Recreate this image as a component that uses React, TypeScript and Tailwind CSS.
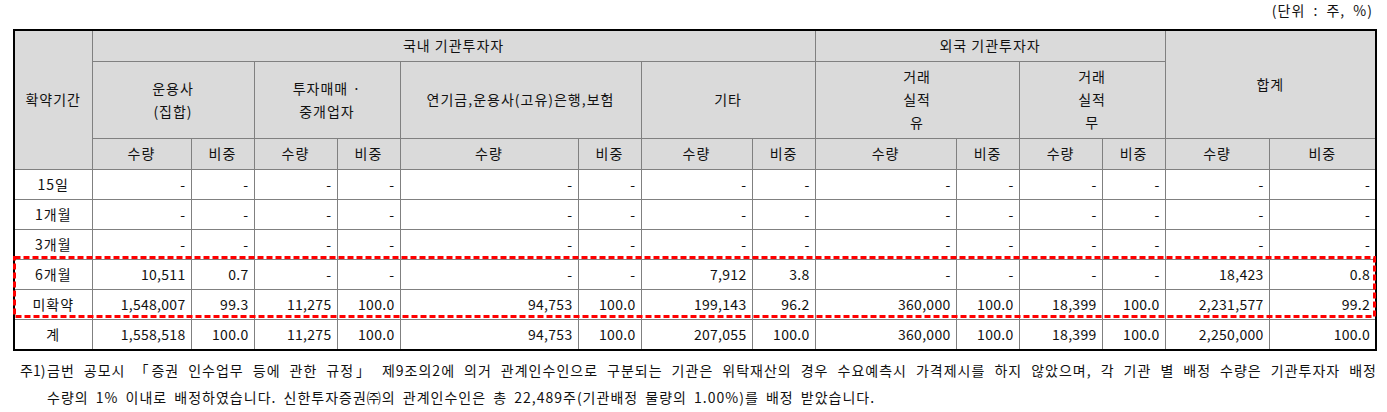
import React from 'react'

const cols = [77, 99, 63, 83, 63, 178, 63, 111, 63, 141, 63, 83, 63, 104, 106]

type Row = { label: string; values: string[] }

const rows: Row[] = [
  { label: '15일', values: ['-', '-', '-', '-', '-', '-', '-', '-', '-', '-', '-', '-', '-', '-'] },
  { label: '1개월', values: ['-', '-', '-', '-', '-', '-', '-', '-', '-', '-', '-', '-', '-', '-'] },
  { label: '3개월', values: ['-', '-', '-', '-', '-', '-', '-', '-', '-', '-', '-', '-', '-', '-'] },
  { label: '6개월', values: ['10,511', '0.7', '-', '-', '-', '-', '7,912', '3.8', '-', '-', '-', '-', '18,423', '0.8'] },
  { label: '미확약', values: ['1,548,007', '99.3', '11,275', '100.0', '94,753', '100.0', '199,143', '96.2', '360,000', '100.0', '18,399', '100.0', '2,231,577', '99.2'] },
  { label: '계', values: ['1,558,518', '100.0', '11,275', '100.0', '94,753', '100.0', '207,055', '100.0', '360,000', '100.0', '18,399', '100.0', '2,250,000', '100.0'] },
]

const th = 'border border-[#808080] bg-[#dadada] font-normal text-center align-middle p-0 tracking-[1px]'
const td = 'border border-[#808080] h-[30px] p-0 pr-[5px] text-right align-middle whitespace-nowrap tracking-[0.3px]'

export default function App() {
  return (
    <div
      className="w-[1387px] h-[412px] bg-white text-[14px] text-[#111] overflow-hidden pl-[13px]"
      style={{ fontFamily: '"Noto Sans CJK KR", "Noto Sans", sans-serif' }}
    >
      <div className="w-[1364px] h-[29px] flex justify-end pr-[4px] pt-[1px] leading-[18px] tracking-[1px] [word-spacing:4px]">(단위 : 주, %)</div>

      <div className="relative w-[1364px] border-2 border-black">
        <table className="table-fixed border-collapse border-hidden w-[1360px] leading-[23px]">
          <colgroup>
            {cols.map((w, i) => (
              <col key={i} style={{ width: w }} />
            ))}
          </colgroup>
          <thead>
            <tr className="h-[30px]">
              <th rowSpan={3} className={th}>확약기간</th>
              <th colSpan={8} className={th}>국내 기관투자자</th>
              <th colSpan={4} className={th}>외국 기관투자자</th>
              <th colSpan={2} rowSpan={2} className={th}>합계</th>
            </tr>
            <tr className="h-[77px]">
              <th colSpan={2} className={th}>운용사<br />(집합)</th>
              <th colSpan={2} className={th}>투자매매 ·<br />중개업자</th>
              <th colSpan={2} className={th}>연기금,운용사(고유)은행,보험</th>
              <th colSpan={2} className={th}>기타</th>
              <th colSpan={2} className={th}>거래<br />실적<br />유</th>
              <th colSpan={2} className={th}>거래<br />실적<br />무</th>
            </tr>
            <tr className="h-[31px]">
              {Array.from({ length: 7 }).flatMap((_, i) => [
                <th key={`q${i}`} className={th}>수량</th>,
                <th key={`r${i}`} className={th}>비중</th>,
              ])}
            </tr>
          </thead>
          <tbody>
            {rows.map((r) => (
              <tr key={r.label}>
                <td className="border border-[#808080] h-[30px] p-0 text-center align-middle tracking-[1px]">{r.label}</td>
                {r.values.map((v, i) => (
                  <td key={i} className={td}>{v}</td>
                ))}
              </tr>
            ))}
          </tbody>
        </table>

        {/* 6개월 / 미확약 강조 박스 */}
        <svg className="absolute left-[-2px] top-[225px] w-[1363px] h-[62px] pointer-events-none" viewBox="0 0 1363 62">
          <rect x="1.5" y="1.5" width="1360" height="59" fill="none" stroke="#ff0000" strokeWidth="3" strokeDasharray="6 3" />
        </svg>
      </div>

      <div className="flex pl-[7px] mt-[6px] leading-[27px] tracking-[1px] [word-spacing:3px]">
        <div className="w-[27px] shrink-0 whitespace-nowrap tracking-normal">주1)</div>
        <div className="w-[1330px] whitespace-nowrap">
          <div className="text-justify [text-align-last:justify]">금번 공모시 「증권 인수업무 등에 관한 규정」 제9조의2에 의거 관계인수인으로 구분되는 기관은 위탁재산의 경우 수요예측시 가격제시를 하지 않았으며, 각 기관 별 배정 수량은 기관투자자 배정</div>
          <div>수량의 1% 이내로 배정하였습니다. 신한투자증권㈜의 관계인수인은 총 22,489주(기관배정 물량의 1.00%)를 배정 받았습니다.</div>
        </div>
      </div>
    </div>
  )
}
